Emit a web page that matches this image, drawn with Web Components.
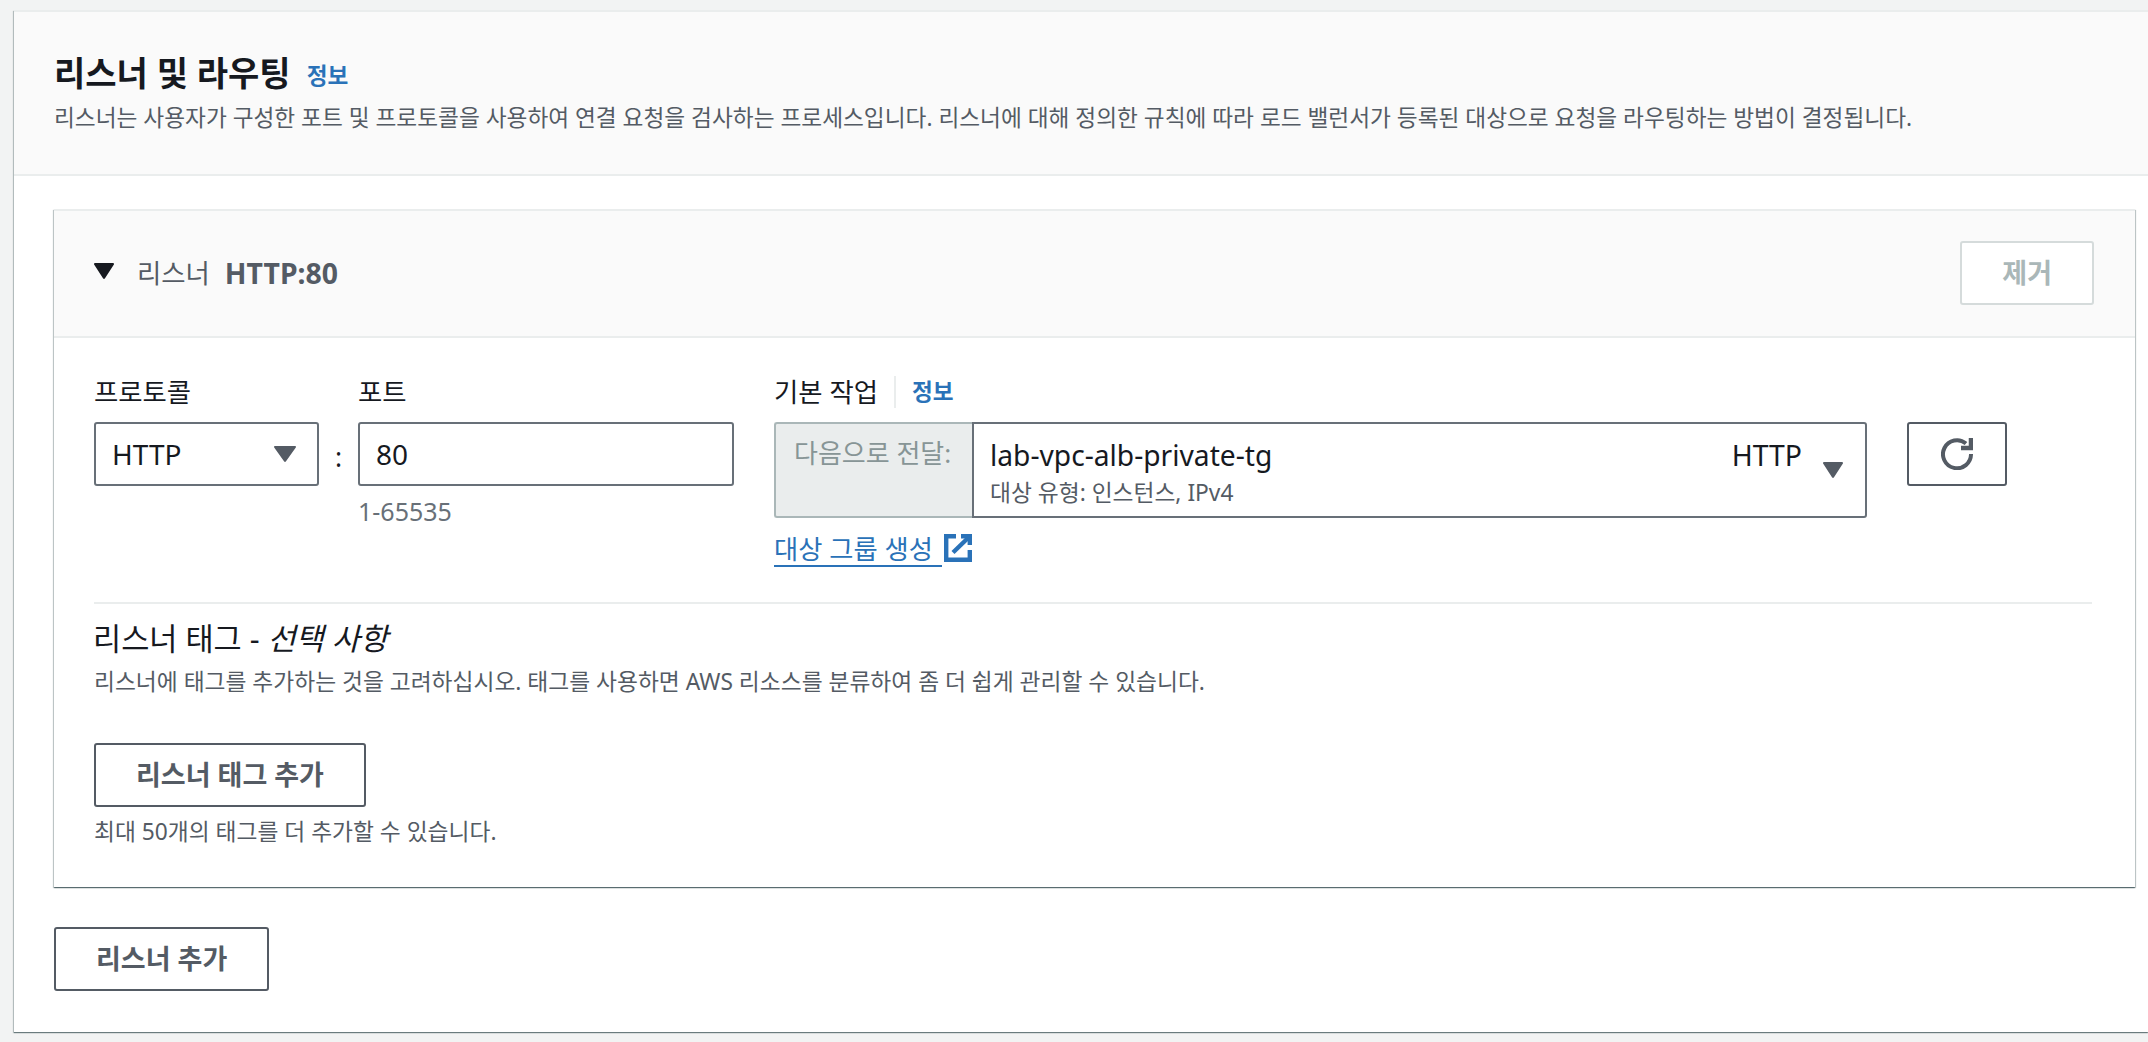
<!DOCTYPE html>
<html lang="ko"><head><meta charset="utf-8">
<style>
html,body{margin:0;padding:0;background:#f2f3f3;height:1042px;overflow:hidden}
body{font-family:"Noto Sans","Noto Sans CJK KR",sans-serif;color:#16191f;font-size:26.4px;line-height:30px;padding-top:10px;box-sizing:border-box}
</style></head><body>
<template id="t-panel"><style>
:host{display:block;margin-left:14px;background:#fff;border-top:2px solid #eaeded;box-shadow:0 1px 1px 0 rgba(0,28,36,.45),-1px 1px 1px 0 rgba(0,28,36,.2)}
header{background:#fafafa;border-bottom:2px solid #eaeded;padding:38px 40px 41px}
.t{display:flex;align-items:center;height:44px;gap:16px}
h2{margin:2px 0 0;font-size:34px;line-height:44px;font-weight:700;color:#16191f}
.t ::slotted(x-info){margin-top:7px}
p{margin:9px 0 0;font-size:22.68px;line-height:30px;color:#545b64}
.b{padding:33px 13px 41px 40px}
::slotted(x-button){margin-top:40px}
</style><header><div class="t"><h2><slot name="title"></slot></h2><slot name="info"></slot></div><p><slot name="desc"></slot></p></header><div class="b"><slot></slot></div></template>

<template id="t-listener"><style>
:host{display:block;background:#fff;border-top:2px solid #eaeded;box-shadow:0 1px 1px 0 rgba(0,28,36,.45),1px 1px 1px 0 rgba(0,28,36,.2),-1px 1px 1px 0 rgba(0,28,36,.2)}
header{display:flex;align-items:center;justify-content:space-between;background:#fafafa;border-bottom:2px solid #eaeded;height:123px;padding:0 41px 2px 40px}
.l{display:flex;align-items:center;color:#545b64}
svg{display:block;margin:-4px 23px 0 0}
b{margin-left:15px;font-weight:700;font-size:28.4px}
.c{padding:39px 43px 40px 40px}
</style><header><div class="l"><svg width="20" height="16" viewBox="0 0 20 16"><path d="M1 0h18a1 1 0 0 1 .9 1.5L11 15.2a1.2 1.2 0 0 1-2 0L.1 1.5A1 1 0 0 1 1 0z" fill="#16191f"/></svg><span><slot name="label"></slot></span><b><slot name="value"></slot></b></div><slot name="action"></slot></header><div class="c"><slot></slot></div></template>

<template id="t-button"><style>
:host{display:flex;align-items:center;justify-content:center;box-sizing:border-box;height:64px;width:max-content;padding:0 var(--px,40px);background:#fff;border:2px solid #545b64;border-radius:3px;color:#545b64;font-size:27px;font-weight:700;line-height:30px}
:host([disabled]){border-color:#d5dbdb;color:#aab7b8}
</style><slot></slot></template>

<template id="t-field"><style>
:host{display:block}
.lab{display:flex;align-items:center;height:30px;margin-bottom:15px;color:#16191f}
</style><div class="lab"><slot name="label"></slot></div><slot></slot></template>

<template id="t-select"><style>
:host{display:flex;align-items:center;justify-content:space-between;box-sizing:border-box;width:225px;height:64px;padding:0 21px 0 16px;background:#fff;border:2px solid #687078;border-radius:3px;color:#16191f;font-size:28px}
</style><slot></slot><svg width="22" height="16" viewBox="0 0 22 16"><path d="M1 0h20a1 1 0 0 1 .8 1.5L12 15.2a1.2 1.2 0 0 1-2 0L.2 1.5A1 1 0 0 1 1 0z" fill="#545b64"/></svg></template>

<template id="t-input"><style>
:host{display:block;width:376px}
.i{box-sizing:border-box;height:64px;display:flex;align-items:center;padding-left:16px;border:2px solid #687078;border-radius:3px;color:#16191f;font-size:28px}
.h{margin-top:10px;height:30px;color:#687078;font-size:25px;line-height:30px}
</style><div class="i"><slot></slot></div><div class="h"><slot name="hint"></slot></div></template>

<template id="t-action"><style>
:host{display:block;width:1093px}
.g{display:flex;height:96px;box-sizing:border-box}
.pre{box-sizing:border-box;width:198px;background:#eaeded;border:2px solid #aab7b8;border-right:0;border-radius:3px 0 0 3px;color:#879596;font-size:26px;line-height:30px;padding:14px 0 0 18px}
.sel{flex:1;box-sizing:border-box;border:2px solid #687078;border-radius:0 3px 3px 0;display:flex;justify-content:space-between;padding:13px 22px 0 16px}
.n{font-size:28.2px;line-height:36px;color:#16191f}
.s{font-size:22.75px;line-height:30px;color:#545b64;margin-top:5px}
.r{display:flex;color:#16191f;font-size:28.4px;line-height:36px}
svg{margin:25px 0 0 21px}
</style><div class="g"><div class="pre"><slot name="pre"></slot></div><div class="sel"><div><div class="n"><slot name="name"></slot></div><div class="s"><slot name="sub"></slot></div></div><div class="r"><slot name="proto"></slot><svg width="20" height="16" viewBox="0 0 20 16"><path d="M1 0h18a1 1 0 0 1 .9 1.5L11 15.2a1.2 1.2 0 0 1-2 0L.1 1.5A1 1 0 0 1 1 0z" fill="#545b64"/></svg></div></div></div></template>

<template id="t-link"><style>
:host{display:flex;align-items:flex-start;width:max-content;margin-top:15px;color:#2a72b8;font-size:26.3px;height:34px;line-height:30px}
span{border-bottom:2px solid #2a72b8;padding-right:9px;margin-right:2px;padding-top:1px;height:31px}
svg{margin-top:1px}
</style><span><slot></slot></span><svg width="28" height="28" viewBox="0 0 28 28" fill="none" stroke="#2a72b8" stroke-width="4.4"><path d="M12 2.2H2.2v23.6h23.6V16"/><path d="M9 18.5L24 4"/><path d="M17 2.2h8.8V11"/></svg></template>

<template id="t-info"><style>
:host{display:inline-block;color:#2a72b8;font-size:22.6px;font-weight:700;line-height:30px}
</style><slot></slot></template>

<template id="t-refresh"><style>
:host{display:flex;align-items:center;justify-content:center;box-sizing:border-box;width:100px;height:64px;border:2px solid #545b64;border-radius:3px;background:#fff}
</style><svg width="32" height="32" viewBox="0 0 32 32" fill="none" stroke="#545b64" stroke-width="4"><path d="M25 5.5A14 14 0 1 0 30 16"/><path d="M30 0v10H20" stroke-width="4.5"/></svg></template>

<template id="t-row"><style>
:host{display:flex;align-items:flex-start}
::slotted(.colon){width:39px;margin-top:45px;height:58px;padding-top:6px;display:flex;align-items:center;justify-content:center;color:#16191f}
</style><slot></slot></template>

<template id="t-tags"><style>
:host{display:block;margin-top:35px;padding-top:19px;border-top:2px solid #eaeded}
h3{margin:0 0 0 -1px;font-size:30.6px;font-weight:400;line-height:30px;color:#16191f}
p{margin:14px 0 0;font-size:22.75px;line-height:30px;color:#545b64}
.a{margin-top:46px}
.h{margin-top:10px;font-size:22.75px;line-height:30px;color:#545b64}
</style><h3><slot name="title"></slot></h3><p><slot name="desc"></slot></p><div class="a"><slot name="button"></slot></div><div class="h"><slot name="hint"></slot></div></template>

<script>
for (const [tag,id] of [['x-panel','t-panel'],['x-listener','t-listener'],['x-button','t-button'],['x-field','t-field'],['x-select','t-select'],['x-input','t-input'],['x-action','t-action'],['x-link','t-link'],['x-info','t-info'],['x-refresh','t-refresh'],['x-row','t-row'],['x-tags','t-tags']]) {
  customElements.define(tag,class extends HTMLElement{constructor(){super();this.attachShadow({mode:'open'}).appendChild(document.getElementById(id).content.cloneNode(true));}});
}
</script>

<x-panel>
  <span slot="title">리스너 및 라우팅</span>
  <x-info slot="info">정보</x-info>
  <span slot="desc">리스너는 사용자가 구성한 포트 및 프로토콜을 사용하여 연결 요청을 검사하는 프로세스입니다. 리스너에 대해 정의한 규칙에 따라 로드 밸런서가 등록된 대상으로 요청을 라우팅하는 방법이 결정됩니다.</span>
  <x-listener>
    <span slot="label">리스너</span><span slot="value">HTTP:80</span>
    <x-button slot="action" disabled style="--px:40px">제거</x-button>
    <x-row>
      <x-field style="width:225px"><span slot="label">프로토콜</span><x-select>HTTP</x-select></x-field>
      <div class="colon">:</div>
      <x-field style="width:376px;margin-right:40px"><span slot="label">포트</span><x-input>80<span slot="hint">1-65535</span></x-input></x-field>
      <x-field style="margin-right:40px"><span slot="label" style="display:flex;align-items:center">기본 작업<span style="display:block;width:2px;height:32px;background:#eaeded;margin:0 16px"></span><x-info>정보</x-info></span>
        <x-action><span slot="pre">다음으로 전달:</span><span slot="name">lab-vpc-alb-private-tg</span><span slot="sub">대상 유형: 인스턴스, IPv4</span><span slot="proto">HTTP</span></x-action>
        <x-link>대상 그룹 생성</x-link>
      </x-field>
      <x-refresh style="margin-top:45px"></x-refresh>
    </x-row>
    <x-tags>
      <span slot="title">리스너 태그 - <i>선택 사항</i></span>
      <span slot="desc">리스너에 태그를 추가하는 것을 고려하십시오. 태그를 사용하면 AWS 리소스를 분류하여 좀 더 쉽게 관리할 수 있습니다.</span>
      <x-button slot="button">리스너 태그 추가</x-button>
      <span slot="hint">최대 50개의 태그를 더 추가할 수 있습니다.</span>
    </x-tags>
  </x-listener>
  <x-button>리스너 추가</x-button>
</x-panel>
</body></html>
